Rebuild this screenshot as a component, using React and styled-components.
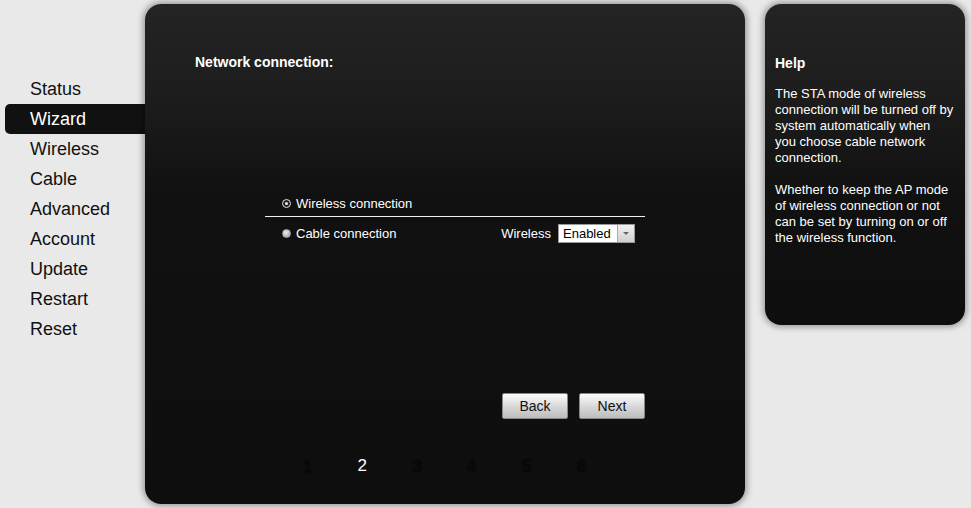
import React from "react";
import styled, { createGlobalStyle } from "styled-components";

const Global = createGlobalStyle`
  html, body { margin: 0; padding: 0; background: #e9e9e9; }
  body { font-family: "Liberation Sans", Arial, sans-serif; }
`;

const Page = styled.div`
  display: flex;
  width: 971px;
  height: 508px;
  padding-top: 4px;
  box-sizing: border-box;
  overflow: hidden;
`;

const Nav = styled.ul`
  list-style: none;
  margin: 70px 0 0 5px;
  padding: 0;
  width: 140px;
`;

const NavItem = styled.li`
  height: 30px;
  line-height: 30px;
  padding-left: 25px;
  font-size: 18px;
  color: ${(p) => (p.active ? "#fff" : "#111")};
  background: ${(p) => (p.active ? "#111" : "transparent")};
  border-radius: 5px 0 0 5px;
`;

const Panel = styled.div`
  position: relative;
  width: ${(p) => p.w}px;
  height: ${(p) => p.h}px;
  border-radius: 16px;
  background: linear-gradient(#242424 0, #1d1d1d 90px, #111 190px, #0e0e0e 100%);
  box-shadow: 0 0 6px 2px rgba(0, 0, 0, 0.35);
  color: #fff;
  box-sizing: border-box;
  flex-shrink: 0;
`;

const Main = styled(Panel)`
  display: flex;
  flex-direction: column;
  padding: 49px 0 0 50px;
`;

const Title = styled.h2`
  margin: 0;
  font-size: 14px;
  font-weight: bold;
  line-height: 18px;
`;

const Form = styled.div`
  margin: 119px 0 0 70px;
  width: 380px;
`;

const Row = styled.div`
  display: flex;
  align-items: center;
  height: ${(p) => p.h}px;
  padding-left: 17px;
  font-size: 13px;
  border-bottom: ${(p) => (p.line ? "1px solid #f2f2f2" : "none")};
`;

const Radio = styled.span`
  width: 9px;
  height: 9px;
  border-radius: 50%;
  box-sizing: border-box;
  margin-right: 5px;
  position: relative;
  border: 1px solid ${(p) => (p.checked ? "#ddd" : "#aaa")};
  background: ${(p) =>
    p.checked ? "#222" : "radial-gradient(circle at 40% 35%, #eee, #999)"};
  &::after {
    content: "";
    display: ${(p) => (p.checked ? "block" : "none")};
    position: absolute;
    left: 2px;
    top: 2px;
    width: 3px;
    height: 3px;
    border-radius: 50%;
    background: #eee;
  }
`;

const Spacer = styled.span`
  flex: 1;
`;

const Label = styled.span`
  margin-right: 7px;
`;

const Select = styled.div`
  display: flex;
  width: 77px;
  height: 19px;
  margin-right: 10px;
  background: #fff;
  border: 1px solid #999;
  box-sizing: border-box;
  color: #000;
  font-size: 13px;
`;

const SelectText = styled.span`
  flex: 1;
  padding-left: 4px;
  line-height: 17px;
`;

const Arrow = styled.span`
  width: 16px;
  background: linear-gradient(#f2f2f2, #cfcfcf);
  border-left: 1px solid #aaa;
  display: flex;
  align-items: center;
  justify-content: center;
  &::after {
    content: "";
    border-left: 3px solid transparent;
    border-right: 3px solid transparent;
    border-top: 3px solid #666;
  }
`;

const Buttons = styled.div`
  display: flex;
  justify-content: flex-end;
  gap: 11px;
  margin-top: 144px;
`;

const Button = styled.button`
  width: 66px;
  height: 26px;
  border: 1px solid #888;
  border-radius: 2px;
  background: linear-gradient(#fdfdfd, #d6d6d6 55%, #bdbdbd);
  font-family: "Liberation Sans", Arial, sans-serif;
  font-size: 14px;
  color: #111;
  padding: 0;
`;

const Pager = styled.div`
  display: flex;
  margin: 36px 0 0 85px;
`;

const PageNum = styled.span`
  width: 54.8px;
  text-align: center;
  font-size: 17px;
  line-height: 22px;
  color: ${(p) => (p.active ? "#fff" : "#0a0a0a")};
  text-shadow: ${(p) => (p.active ? "none" : "0 1px 2px #000")};
`;

const Help = styled(Panel)`
  margin-left: 20px;
  padding: 50px 11px 0 10px;
`;

const HelpTitle = styled.h3`
  margin: 0 0 14px;
  font-size: 14px;
  font-weight: bold;
  line-height: 18px;
`;

const HelpText = styled.p`
  margin: 0 0 16px;
  font-size: 13px;
  line-height: 16px;
`;

const items = ["Status", "Wizard", "Wireless", "Cable", "Advanced", "Account", "Update", "Restart", "Reset"];

export default function App() {
  return (
    <Page>
      <Global />
      <Nav>
        {items.map((i) => (
          <NavItem key={i} active={i === "Wizard"}>
            {i}
          </NavItem>
        ))}
      </Nav>
      <Main w={600} h={500}>
        <Title>Network connection:</Title>
        <Form>
          <Row h={26} line>
            <Radio checked />
            Wireless connection
          </Row>
          <Row h={32}>
            <Radio />
            Cable connection
            <Spacer />
            <Label>Wireless</Label>
            <Select>
              <SelectText>Enabled</SelectText>
              <Arrow />
            </Select>
          </Row>
          <Buttons>
            <Button>Back</Button>
            <Button>Next</Button>
          </Buttons>
        </Form>
        <Pager>
          {[1, 2, 3, 4, 5, 6].map((n) => (
            <PageNum key={n} active={n === 2}>
              {n}
            </PageNum>
          ))}
        </Pager>
      </Main>
      <Help w={200} h={321}>
        <HelpTitle>Help</HelpTitle>
        <HelpText>
          The STA mode of wireless connection will be turned off by system automatically when you choose cable network connection.
        </HelpText>
        <HelpText>
          Whether to keep the AP mode of wireless connection or not can be set by turning on or off the wireless function.
        </HelpText>
      </Help>
    </Page>
  );
}
